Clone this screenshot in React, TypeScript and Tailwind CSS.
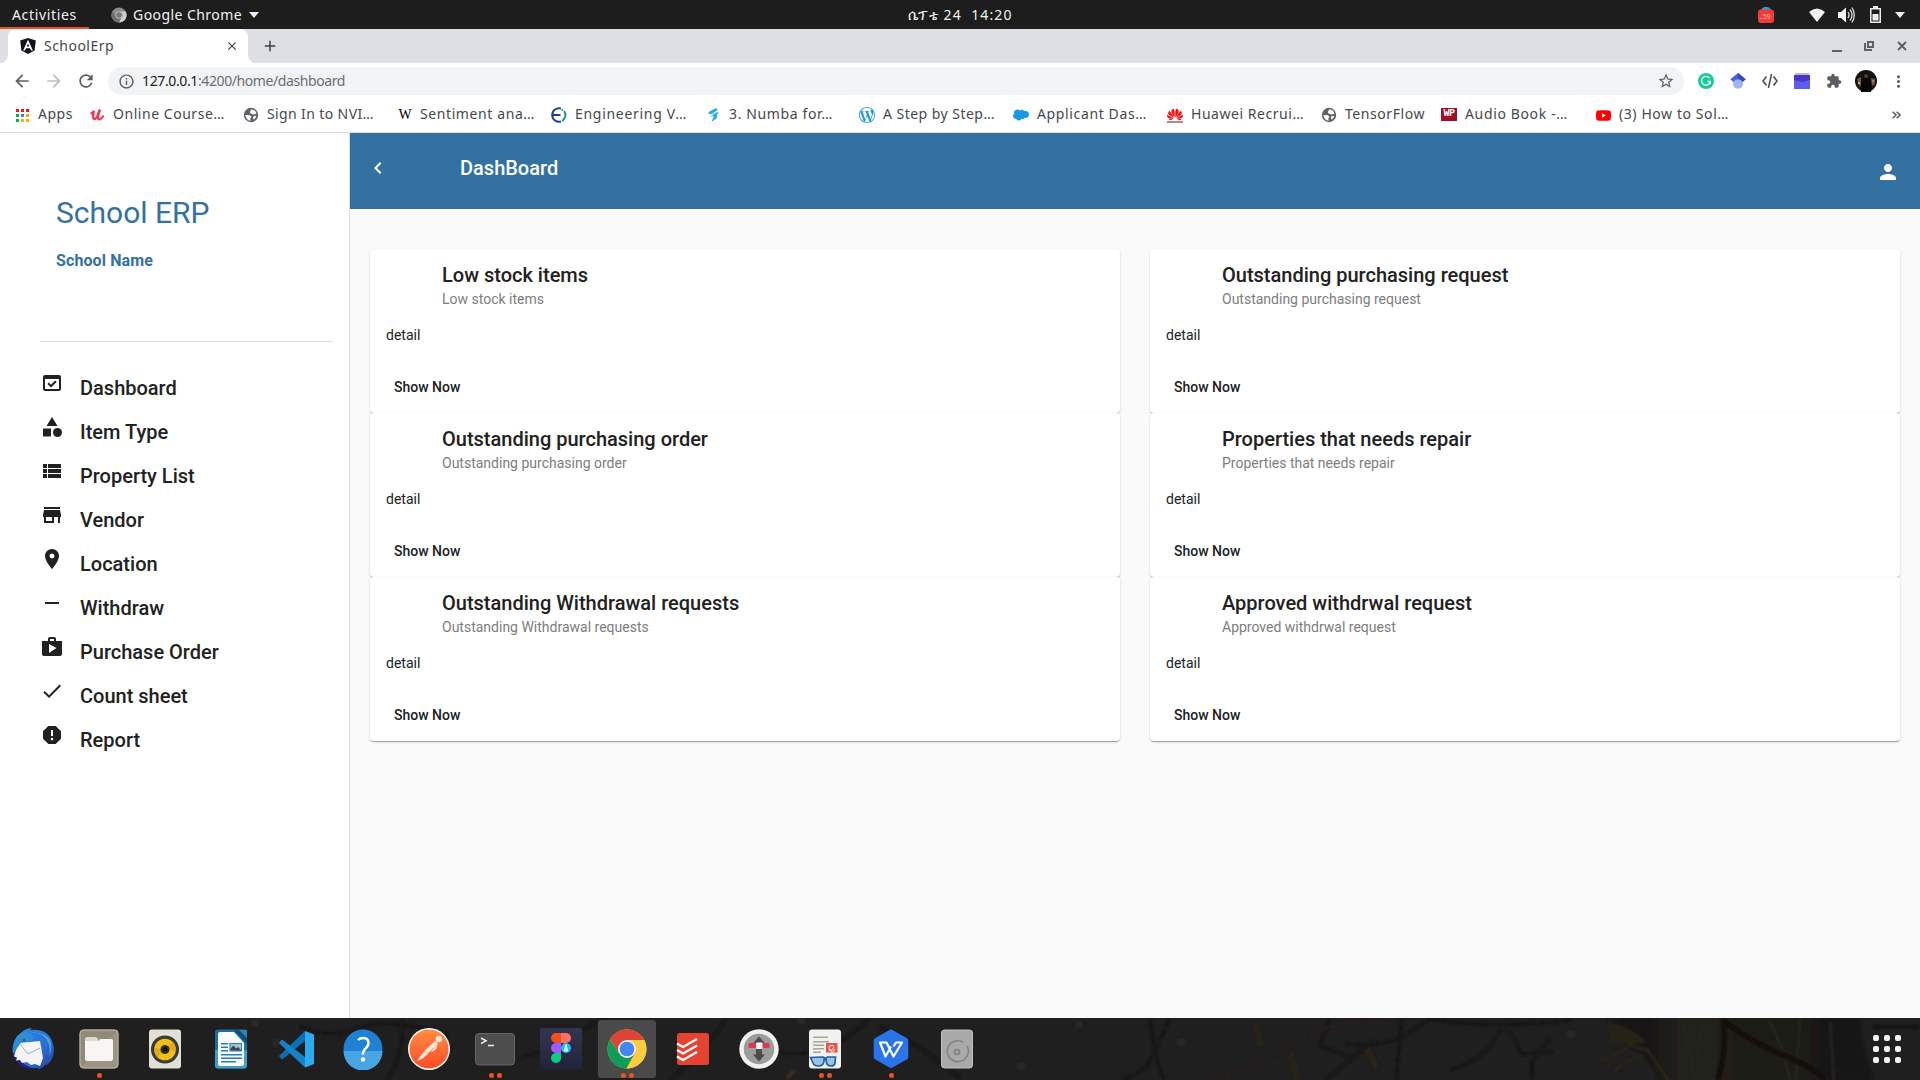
import { useLayoutEffect, useRef, useState, type ReactNode } from "react";
import {
  MdCategory,
  MdCheck,
  MdChevronLeft,
  MdDomainVerification,
  MdExtension,
  MdInfoOutline,
  MdLocationOn,
  MdPerson,
  MdRemove,
  MdReport,
  MdShop,
  MdStarBorder,
  MdStore,
  MdViewList,
  MdArrowBack,
  MdArrowForward,
  MdRefresh,
  MdMoreVert,
  MdClose,
  MdAdd,
} from "react-icons/md";
import { SiHuawei, SiSalesforce, SiWordpress, SiYoutube } from "react-icons/si";

/** Single line of text tracked so that it fills the given width. */
function Fit({ w, children, className = "" }: { w: number; children: string; className?: string }) {
  const ref = useRef<HTMLSpanElement>(null);
  const [spacing, setSpacing] = useState(0);
  useLayoutEffect(() => {
    const natural = ref.current!.getBoundingClientRect().width;
    setSpacing((w - natural) / children.length);
  }, [w, children]);
  return (
    <span ref={ref} className={"inline-block whitespace-pre " + className} style={{ letterSpacing: spacing }}>
      {children}
    </span>
  );
}

/* ---------- desktop top bar ---------- */

function TopBar() {
  return (
    <div className="grid h-[29px] grid-cols-[1fr_auto_1fr] bg-[#1d1d1d] text-[14px] text-[#f2f2f2]">
      <div className="flex">
        <div className="flex h-[29px] w-[89px] items-center border-b-2 border-[#e95420] pl-3 pt-[2px]">
          <Fit w={65}>Activities</Fit>
        </div>
        <div className="flex items-center pl-[22px]">
          <svg viewBox="0 0 16 16" className="h-4 w-4">
            <circle cx="8" cy="8" r="7.6" fill="#8d8d8d" />
            <path d="M8 4.4h6.7A7.6 7.6 0 0 1 8 15.6l3.1-5.8A3.6 3.6 0 0 0 8 4.4z" fill="#d0d0d0" />
            <path d="M1.4 4.2 4.9 9.8A3.6 3.6 0 0 0 9.5 11.3L8 15.6A7.6 7.6 0 0 1 1.4 4.2z" fill="#6f6f6f" />
            <circle cx="8" cy="8" r="3.5" fill="#bbb" />
            <circle cx="8" cy="8" r="2.7" fill="#777" />
          </svg>
          <Fit w={109} className="ml-[6px]">Google Chrome</Fit>
          <svg viewBox="0 0 10 6" className="ml-[7px] mt-px h-[6px] w-[10px]">
            <path d="M0 0h10L5 6z" fill="#eee" />
          </svg>
        </div>
      </div>
      <div className="flex items-center">
        <Fit w={105}>ሴፕቴ 24  14:20</Fit>
      </div>
      <div className="flex items-center justify-end pr-[15px]">
        <svg viewBox="0 0 16 16" className="h-4 w-4">
          <path d="M3 4a5 4.2 0 0 1 10 0z" fill="#2d9cdb" />
          <rect x="0" y="2.500" width="16" height="13.5" rx="3" fill="#f23b36" />
          <text x="1.500" y="11.800" fontSize="6.5" fill="#ffc4c0" fontFamily="Noto Sans">..59</text>
        </svg>
        <svg viewBox="0 0 16 14" className="ml-[35px] h-[14px] w-4">
          <path d="M8 14 0 4Q8-3 16 4z" fill="#f2f2f2" />
        </svg>
        <svg viewBox="0 0 17 16" className="ml-[13px] h-4 w-[17px]">
          <path d="M0 5h3l5-4.500v15L3 11H0z" fill="#f2f2f2" />
          <path d="M10 5q2 3 0 6M12 2.500q4 5.500 0 11M14 .5q4.500 7.500 0 15" stroke="#ddd" strokeWidth="1.3" fill="none" />
        </svg>
        <svg viewBox="0 0 11 17" className="ml-[15px] h-[17px] w-[11px]">
          <path d="M.75 2.750h9.500v13.500H.75z" fill="none" stroke="#eee" strokeWidth="1.5" />
          <path d="M3 0h5v2H3zM2.500 8h6v6.500h-6z" fill="#eee" />
        </svg>
        <svg viewBox="0 0 10 6" className="ml-[14px] mt-px h-[6px] w-[10px]">
          <path d="M0 0h10L5 6z" fill="#eee" />
        </svg>
      </div>
    </div>
  );
}

/* ---------- browser chrome ---------- */

function TabStrip() {
  return (
    <div className="flex h-[34px] bg-[#dedfe4]">
      <div className="flex w-2 bg-white">
        <div className="w-2 rounded-br-lg bg-[#dedfe4]" />
      </div>
      <div className="flex w-60 items-center rounded-t-lg bg-white pl-3 pr-[9px]">
        <svg viewBox="0 0 16 16" className="h-4 w-4">
          <path d="M8 0l7.800 2.600-1.200 10L8 16l-6.600-3.400L.2 2.600z" fill="#10131c" />
          <path d="M8 1.800l4.900 10.800H11L10 10.200H6l-1 2.400H3.100zM8 5.400 6.700 8.600h2.600z" fill="#fff" fillRule="evenodd" />
        </svg>
        <Fit w={70} className="mb-px ml-2 text-[14px] text-[#45494d]">SchoolErp</Fit>
        <MdClose className="ml-auto h-[14px] w-[14px] text-[#3c4043]" />
      </div>
      <div className="flex w-2 bg-white">
        <div className="w-2 rounded-bl-lg bg-[#dedfe4]" />
      </div>
      <MdAdd className="ml-[5px] mt-2 h-[18px] w-[18px] text-[#3c4043]" />
      <div className="ml-auto flex items-center pr-[13px] text-[#5f6368]">
        <div className="mt-[9px] h-[2px] w-[10px] bg-[#5f6368]" />
        <svg viewBox="0 0 10 10" className="ml-[22px] h-[10px] w-[10px]">
          <path d="M4 1h5v5H4zM1 2v7h7" fill="none" stroke="#5f6368" strokeWidth="2" />
        </svg>
        <svg viewBox="0 0 10 10" className="ml-[23px] h-[10px] w-[10px]">
          <path d="M1 1l8 8M9 1L1 9" fill="none" stroke="#5f6368" strokeWidth="2" />
        </svg>
      </div>
    </div>
  );
}

function ToolbarCell({ children }: { children: ReactNode }) {
  return <div className="flex w-8 items-center justify-center">{children}</div>;
}

function Toolbar() {
  return (
    <div className="flex h-9 bg-white pl-[6px] pr-1 pt-1 text-[#5a5e63]">
      <div className="flex h-7">
        <ToolbarCell><MdArrowBack className="h-[20px] w-[20px]" /></ToolbarCell>
        <ToolbarCell><MdArrowForward className="h-[20px] w-[20px] text-[#bcbec1]" /></ToolbarCell>
        <ToolbarCell><MdRefresh className="h-[20px] w-[20px]" /></ToolbarCell>
      </div>
      <div className="ml-[6px] flex h-7 w-[1576px] items-center rounded-full bg-[#f1f3f4] pl-[10px] pr-[9px]">
        <MdInfoOutline className="h-[17px] w-[17px]" />
        <div className="mb-[2px] ml-[7px] flex text-[14px]">
          <Fit w={56} className="text-[#202124]">127.0.0.1</Fit>
          <Fit w={147} className="text-[#6b6f74]">:4200/home/dashboard</Fit>
        </div>
        <MdStarBorder className="ml-auto h-[18px] w-[18px]" />
      </div>
      <div className="ml-[6px] flex h-7">
        <ToolbarCell>
          <svg viewBox="0 0 16 16" className="h-4 w-4">
            <circle cx="8" cy="8" r="8" fill="#0fce9b" />
            <path d="M11.500 5.200A4.400 4.400 0 1 0 12.300 8.500H9.500M12.300 8.500v2.600" fill="none" stroke="#fff" strokeWidth="1.4" />
          </svg>
        </ToolbarCell>
        <ToolbarCell>
          <svg viewBox="0 0 16 16" className="h-4 w-4">
            <circle cx="8" cy="10.800" r="5" fill="#a0b4f7" />
            <path d="M8 0 .3 6.200 3.500 9a5 5 0 0 1 9 0l3.200-2.800z" fill="#4c5fe0" />
            <path d="M8 0l7.700 6.200L12.500 9A5 5 0 0 0 8 6z" fill="#3b43b8" />
          </svg>
        </ToolbarCell>
        <ToolbarCell>
          <svg viewBox="0 0 16 14" className="h-[14px] w-4" fill="none" stroke="#45494d" strokeWidth="1.5">
            <path d="M4.500 2.500 1 7l3.500 4.500M11.500 2.500 15 7l-3.500 4.500M9.600 0 6.400 14" />
          </svg>
        </ToolbarCell>
        <ToolbarCell>
          <svg viewBox="0 0 16 16" className="h-4 w-4">
            <path d="M1 0h14v2H1z" fill="#bdbdbd" />
            <path d="M0 2h16v14H0z" fill="#5b5cf0" />
            <path d="M0 2h16v5L8 9 0 7z" fill="#4a35cf" />
          </svg>
        </ToolbarCell>
        <ToolbarCell><MdExtension className="h-4 w-4" /></ToolbarCell>
        <ToolbarCell>
          <svg viewBox="0 0 22 22" className="h-[22px] w-[22px]">
            <circle cx="11" cy="11" r="11" fill="#15110f" />
            <path d="M2 9l4-2v8l-2 2zM16 8l4 1v5l-3 2z" fill="#6d5a42" />
            <path d="M6 22q-1-12 3-14h4q4 2 3 14z" fill="#050505" />
            <circle cx="11" cy="6" r="2" fill="#54372a" />
            <circle cx="4" cy="13" r="1" fill="#d8c9a0" />
            <circle cx="18" cy="11" r="1" fill="#cf7d68" />
          </svg>
        </ToolbarCell>
        <div className="flex w-8 items-center justify-center"><MdMoreVert className="h-[19px] w-[19px]" /></div>
      </div>
    </div>
  );
}

function Globe() {
  return (
    <svg viewBox="0 0 16 16" className="h-4 w-4">
      <circle cx="8" cy="8" r="7.2" fill="#5f6368" />
      <path d="M2.300 8 7 8.300l1.500 1.700-1.300 1.500.6 2.300Q3 13 2.300 8zM8 2.600q4-.6 5.500 3.800L11 7.600 8.500 7 6.800 5.500zM9.800 9.800l3.500-1.300q-.4 2.800-2.600 4.200z" fill="#fff" />
    </svg>
  );
}

const appColors = ["bg-[#f0141e]", "bg-[#f0141e]", "bg-[#f0141e]", "bg-[#0fa55a]", "bg-[#3f7df5]", "bg-[#f5a800]", "bg-[#0fa55a]", "bg-[#f5b400]", "bg-[#f5b400]"];

const bookmarks: { label: string; cell: string; width: number; icon: ReactNode }[] = [
  {
    label: "Apps", cell: "w-[75px]", width: 34,
    icon: (
      <span className="grid w-[13px] grid-cols-3 gap-[2px]">
        {appColors.map((c, i) => <i key={i} className={"h-[3px] w-[3px] " + c} />)}
      </span>
    ),
  },
  {
    label: "Online Course…", cell: "w-[154px]", width: 111,
    icon: (
      <svg viewBox="0 0 16 16" className="h-4 w-4" fill="none" stroke="#f0394f" strokeLinecap="round">
        <path d="M2.500 6.300Q4 6 5 3.800 3.500 9 4.300 11.300q1.700 2 4-1.800L10.500 3.500" strokeWidth="2.4" />
        <path d="M10.500 3.500 9 9.500q-.5 3.500 2 2.800 1.500-.5 3-3" strokeWidth="2.2" />
      </svg>
    ),
  },
  { label: "Sign In to NVI…", cell: "w-[153px]", width: 106, icon: <Globe /> },
  { label: "Sentiment ana…", cell: "w-[155px]", width: 114, icon: <span className="ml-[2px] font-['Liberation_Serif'] text-[14px] leading-4 text-black">W</span> },
  {
    label: "Engineering V…", cell: "w-[154px]", width: 111,
    icon: (
      <svg viewBox="0 0 16 16" className="h-4 w-4" fill="none" strokeWidth="2">
        <path d="M10 1.500A6.800 6.800 0 1 0 10 14.500M2 8h7.500" stroke="#23408e" />
        <path d="M10.500 3h1.500M13 4a6.800 6.800 0 0 1 0 8q-1 1.500-2 2" stroke="#1a9c84" />
      </svg>
    ),
  },
  {
    label: "3. Numba for…", cell: "w-[154px]", width: 103,
    icon: (
      <svg viewBox="0 0 16 16" className="h-4 w-4">
        <path d="M11.500 1 5 4.200Q2.500 5.500 4 7.200L11 6l-6 3.500 4-.6-2.500 6L11 11.800Q13 10 11.800 8L14 5.200 8 6l4.500-3z" fill="#22a7f0" />
      </svg>
    ),
  },
  { label: "A Step by Step…", cell: "w-[154px]", width: 111, icon: <SiWordpress className="h-4 w-4 text-[#1a9ad6]" /> },
  { label: "Applicant Das…", cell: "w-[154px]", width: 109, icon: <SiSalesforce className="h-4 w-4 text-[#1798e0]" /> },
  {
    label: "Huawei Recrui…", cell: "w-[154px]", width: 112,
    icon: (
      <span className="flex flex-col items-center">
        <SiHuawei className="h-[15px] w-4 text-[#f21414]" preserveAspectRatio="none" />
        <span className="-mt-px h-[2px] w-4 bg-[#b08a8a]" />
      </span>
    ),
  },
  { label: "TensorFlow", cell: "w-[120px]", width: 79, icon: <Globe /> },
  {
    label: "Audio Book -…", cell: "w-[154px]", width: 102,
    icon: (
      <span className="flex h-[13px] w-4 -translate-y-px items-center justify-center bg-[#a30e22] font-['Liberation_Mono'] text-[10px] font-bold leading-none tracking-tighter text-white">
        WP
      </span>
    ),
  },
  { label: "(3) How to Sol…", cell: "w-[154px]", width: 109, icon: <SiYoutube className="h-[15px] w-[15px] text-[#ff0000]" /> },
];

function BookmarkBar() {
  return (
    <div className="flex h-[34px] items-center border-b border-[#d9dbe0] bg-white pb-px pl-[14px] text-[14px] text-[#45494d]">
      {bookmarks.map((b) => (
        <div key={b.label} className={"flex shrink-0 items-center " + b.cell}>
          <span className="flex h-4 w-4 items-center justify-center">{b.icon}</span>
          <Fit w={b.width + 1} className="mb-[3px] ml-2">{b.label}</Fit>
        </div>
      ))}
      <svg viewBox="0 0 9 8" className="ml-auto mr-[19px] h-2 w-[9px]" fill="none" stroke="#5f6368" strokeWidth="1.6">
        <path d="M.7.7 4 4 .7 7.300M4.700.7 8 4 4.700 7.300" />
      </svg>
    </div>
  );
}

/* ---------- application ---------- */

const menu = [
  { label: "Dashboard", Icon: MdDomainVerification },
  { label: "Item Type", Icon: MdCategory },
  { label: "Property List", Icon: MdViewList },
  { label: "Vendor", Icon: MdStore },
  { label: "Location", Icon: MdLocationOn },
  { label: "Withdraw", Icon: MdRemove },
  { label: "Purchase Order", Icon: MdShop },
  { label: "Count sheet", Icon: MdCheck },
  { label: "Report", Icon: MdReport },
];

function Sidebar() {
  return (
    <aside className="w-[350px] shrink-0 border-r border-[#dcdcdc] bg-white">
      <div className="ml-10 mr-4 h-[209px] border-b border-[#dcdcdc] pl-4 pt-[60px] text-[#3371a1]">
        <h1 className="text-[30px] leading-10">School ERP</h1>
        <p className="mt-[18px] text-[16px] font-bold leading-5">
          <Fit w={97}>School Name</Fit>
        </p>
      </div>
      <nav className="mt-[23px] flex flex-col pl-10">
        {menu.map(({ label, Icon }) => (
          <a key={label} className="flex h-11 items-center text-[20px] font-medium text-[#212121]">
            <Icon className="mb-2 h-6 w-6" />
            <span className="ml-4 mt-[2px]">{label}</span>
          </a>
        ))}
      </nav>
    </aside>
  );
}

const columns = [
  ["Low stock items", "Outstanding purchasing order", "Outstanding Withdrawal requests"],
  ["Outstanding purchasing request", "Properties that needs repair", "Approved withdrwal request"],
];

function Card({ title }: { title: string }) {
  return (
    <section className="h-[164px] rounded bg-white px-4 pt-[14px] text-[14px] text-[#212121] shadow-[0_2px_1px_-1px_rgba(0,0,0,0.2),0_1px_1px_0_rgba(0,0,0,0.14),0_1px_3px_0_rgba(0,0,0,0.12)]">
      <header className="pl-14">
        <h2 className="text-[20px] font-medium leading-6">{title}</h2>
        <p className="mt-[2px] leading-5 text-[#7d7d7d]">{title}</p>
      </header>
      <p className="mt-4 leading-5">detail</p>
      <button className="mt-6 h-9 px-2 font-medium">Show Now</button>
    </section>
  );
}

function Page() {
  return (
    <div className="flex h-[885px] bg-[#fafafa] font-[Roboto,sans-serif]">
      <Sidebar />
      <main className="flex-1">
        <header className="flex h-[76px] items-start bg-[#3371a1] pl-4 pr-5 text-white">
          <MdChevronLeft className="mt-[23px] h-6 w-6" />
          <h1 className="ml-[70px] mt-[23px] text-[20px] font-medium leading-6">DashBoard</h1>
          <MdPerson className="ml-auto mt-[27px] h-6 w-6" />
        </header>
        <div className="grid grid-cols-2 gap-x-[30px] px-5 pt-10">
          {columns.map((titles, i) => (
            <div key={i}>{titles.map((t) => <Card key={t} title={t} />)}</div>
          ))}
        </div>
      </main>
    </div>
  );
}

/* ---------- dock ---------- */

function Art({ children }: { children: ReactNode }) {
  return <svg viewBox="0 0 42 42" className="h-[42px] w-[42px]">{children}</svg>;
}

const dock: { name: string; dots?: number; active?: boolean; art: ReactNode }[] = [
  {
    name: "mail",
    art: (
      <Art>
        <defs>
          <linearGradient id="tb" x1="0" y1="0" x2="1" y2="1"><stop offset="0" stopColor="#2d8be0" /><stop offset=".6" stopColor="#2a6fd6" /><stop offset="1" stopColor="#2a3a9c" /></linearGradient>
        </defs>
        <path d="M10 4q4-4 10-4l-2 2q14-2 20 7 5 8 3.500 17-1 7-8 12l1-3q-3 5-9 6.500l1-2q-6 2-12-2Q1 33 .5 22 .5 11 10 4z" fill="url(#tb)" />
        <path d="M18 5q11-2 17 7 4 7 2 16 4-8 1-16Q32 3 18 5z" fill="#4aa3ea" />
        <path d="M7 36Q1 31 1 24l5 4 8 10 6 3q-8 0-13-5z" fill="#2b1c86" />
        <path d="M3 25 7 15l21-2 3 17-3 8-5-2-4 1-4-3-5 1-2-3-4 .5 1-3-3-1z" fill="#f3f5f6" />
        <path d="M7 15l9 11 12-6" fill="none" stroke="#a9b2bc" strokeWidth="1" />
        <path d="M2 15Q4 6 13 3q9 2 8 8l-4 3-7-1-4 6q-4 1-4.500 8-1-6 .5-12z" fill="#2c8ed8" />
        <circle cx="12" cy="12" r="1.200" fill="#6b4b1f" />
      </Art>
    ),
  },
  {
    name: "files", dots: 1,
    art: (
      <Art>
        <rect x="1.500" y="1.500" width="39" height="39" rx="4" fill="#9d9584" />
        <path d="M3 3h36L3 39z" fill="#918a79" />
        <rect x="2" y="2" width="38" height="38" rx="4" fill="none" stroke="#bbb3a1" />
        <path d="M7 11q0-2 2-2h8q2 0 3 2l1 2v5H7z" fill="#dcd9cf" />
        <rect x="7" y="13" width="28" height="20" rx="2" fill="#f7f6f4" />
        <path d="M7 13h14l1-2h11q2 0 2 2v5H7z" fill="#f7f6f4" />
      </Art>
    ),
  },
  {
    name: "music",
    art: (
      <Art>
        <rect x="5" y="1.500" width="32" height="39" rx="3" fill="#e2dfd4" />
        <circle cx="21" cy="21.500" r="14" fill="#3a3a3a" />
        <circle cx="21" cy="21.500" r="10.800" fill="#f3bd1a" />
        <path d="M21 21.500 29 14q3 4 2.600 9zM21 21.500 13 29q-3-4-2.600-9z" fill="#e0a812" />
        <circle cx="21" cy="21.500" r="4.500" fill="#2d2d2d" />
        <circle cx="21" cy="21.500" r="2.300" fill="#111" />
      </Art>
    ),
  },
  {
    name: "writer",
    art: (
      <Art>
        <rect x="5" y="1.500" width="32" height="39" rx="3" fill="#1a6f9f" />
        <path d="M5 22h32v15q0 3.500-3 3.500H8q-3 0-3-3z" fill="#3f9fcb" />
        <path d="M10 4h14l10 11v21q0 2-2 2H10q-2 0-2-2V6q0-2 2-2z" fill="#fafafa" />
        <path d="M24 2h13v14z" fill="#124c70" />
        <path d="M29 2h8v8z" fill="#2c85b4" />
        <g fill="#1e7fb5">
          <path d="M11 15h7v1.400h-7zM11 18.500h7v1.400h-7zM11 22h7v1.400h-7zM11 26h21v1.400H11zM11 29.500h21v1.400H11zM11 33h15v1.400H11z" />
          <path d="M19.500 15H32v8.500H19.500z" />
        </g>
        <path d="M20.500 16H31v6.500H20.500z" fill="#8fc7e8" />
        <path d="M20.500 22.500v-2l3-3 2.500 3 2-1.500 3 3v.5z" fill="#444" />
        <circle cx="29" cy="17.500" r="1.200" fill="#e6c14a" />
      </Art>
    ),
  },
  {
    name: "code",
    art: (
      <Art>
        <path d="M3 28l3 3.500L29 13V3z" fill="#0a6fb8" />
        <path d="M29 3l9 3.500v29.500l-9 3.500z" fill="#2cabf1" />
        <path d="M3 15 6 11.500 29 29v10.500z" fill="#1583cb" />
      </Art>
    ),
  },
  {
    name: "help",
    art: (
      <Art>
        <circle cx="21" cy="21" r="19.500" fill="#2080d4" />
        <path d="M1.500 23h39A19.500 19.500 0 0 1 1.500 23z" fill="#47a5e6" />
        <path d="M16 12q2-2 5-2 5.500 0 5.500 5 0 3-3 5.500-2.500 2-2.500 6" fill="none" stroke="#fff" strokeWidth="2.4" />
        <circle cx="21" cy="31.500" r="2.200" fill="#fff" />
      </Art>
    ),
  },
  {
    name: "postman",
    art: (
      <Art>
        <defs>
          <linearGradient id="pm" x1="0" y1="0" x2="0" y2="1"><stop offset="0" stopColor="#ff8e42" /><stop offset="1" stopColor="#ff4b26" /></linearGradient>
        </defs>
        <circle cx="21" cy="21" r="21" fill="#fff" />
        <circle cx="21" cy="21" r="19.600" fill="url(#pm)" />
        <circle cx="31" cy="11" r="3.300" fill="#ffe3d8" />
        <path d="M27 13.500l2.500 2-9 9-4-1.500zM16 24l4 1.500-6 5-4.500 2zM29 16l-1 5-5 3" fill="#ffe9df" stroke="#ffe9df" strokeWidth=".7" />
      </Art>
    ),
  },
  {
    name: "terminal", dots: 2,
    art: (
      <Art>
        <rect x="1.500" y="5.500" width="39" height="31.500" rx="3.500" fill="#4d4d4d" stroke="#666" />
        <path d="M7 10l5 2.800-5 2.800" fill="none" stroke="#f0f0f0" strokeWidth="1.6" />
        <path d="M14 17.500h6" stroke="#f0f0f0" strokeWidth="1.5" />
      </Art>
    ),
  },
  {
    name: "figma",
    art: (
      <Art>
        <defs>
          <linearGradient id="fg" x1="0" y1="0" x2="0" y2="1"><stop offset="0" stopColor="#343650" /><stop offset="1" stopColor="#202338" /></linearGradient>
        </defs>
        <rect width="42" height="42" rx="2" fill="url(#fg)" />
        <path d="M21 5h-5a5 5 0 0 0 0 10h5z" fill="#f24e1e" />
        <path d="M21 5h5a5 5 0 0 1 0 10h-5z" fill="#ff7262" />
        <path d="M21 15h-5a5 5 0 0 0 0 10h5z" fill="#a259ff" />
        <path d="M21 25h-5a5 5 0 1 0 5 5z" fill="#0acf83" />
        <circle cx="26" cy="20" r="5" fill="#1abcfe" />
        <path d="M26 16.500 24.300 23h3.400zM24.300 23l1.700-2.500 1.700 2.500" fill="none" stroke="#fff" strokeWidth="1" />
      </Art>
    ),
  },
  {
    name: "chrome", dots: 2, active: true,
    art: (
      <Art>
        <circle cx="21" cy="21" r="19.500" fill="#fdcc40" />
        <path d="M21 12h17.200A19.500 19.500 0 0 0 4 11.500L13.200 25.500z" fill="#db4437" />
        <path d="M4 11.500A19.500 19.500 0 0 0 20.500 40.500L29 25.500 13.200 25.500z" fill="#109d58" />
        <path d="M21 12h17.200A19.500 19.500 0 0 1 20.500 40.500L28.800 25.500z" fill="#fdcc40" />
        <circle cx="21" cy="21" r="9" fill="#f2f2f2" />
        <circle cx="21" cy="21" r="7.300" fill="#4285f4" />
      </Art>
    ),
  },
  {
    name: "tasks",
    art: (
      <Art>
        <rect x="5" y="5" width="32" height="32" rx="2.500" fill="#e44332" />
        <path d="M5 15.500l6 3.500 14-8M5 22l6 3.500 14-8M5 28.500l6 3.500 14-8" fill="none" stroke="#fff" strokeWidth="2.2" />
      </Art>
    ),
  },
  {
    name: "transmission",
    art: (
      <Art>
        <circle cx="21" cy="21" r="19.700" fill="#f1f1f1" />
        <circle cx="21" cy="21" r="15.300" fill="#9a9d99" />
        <path d="M21 8.500l6 7h-3v11h3l-6 7-6-7h3v-11h-3z" fill="#4c4c4c" />
        <rect x="10.500" y="15" width="21" height="5" rx="1.500" fill="#ea3148" />
        <rect x="18" y="14.500" width="6.500" height="6.500" rx="1" fill="#f7f7f7" />
      </Art>
    ),
  },
  {
    name: "viewer", dots: 2,
    art: (
      <Art>
        <rect x="5" y="1.500" width="32" height="39" rx="3" fill="#f1f1f0" />
        <path d="M9 8.500h15v1.500H9zM9 13h16v1.500H9zM9 16.500h11v1.500H9zM9 20h11v1.500H9zM9 23.500h8V25H9z" fill="#aaa698" />
        <rect x="22" y="15" width="11.500" height="9.500" fill="#ee5145" />
        <path d="M24.500 22q4 1 5-2t-2.500-2.500-1 4.500 5-1" fill="none" stroke="#fff" />
        <path d="M6.500 29.500 19 29q1.500 0 1.500 2l-1 4q-1 3-5 3-4.500 0-5.500-3zM22 31q0-2 2-2h7.500l-.5 6q-.5 3-4 3t-4.500-3z" fill="#9cc3e6" stroke="#2560a0" strokeWidth="1.7" />
        <path d="M19.500 31h3" stroke="#2560a0" strokeWidth="1.7" />
      </Art>
    ),
  },
  {
    name: "wps", dots: 1,
    art: (
      <Art>
        <path d="M21 1.500q1 0 2 .7l14 8q1.300.8 1.300 2.400v16.300q0 1.600-1.300 2.400l-14 8q-2 1.200-4 0l-14-8q-1.300-.8-1.300-2.400V12.600q0-1.600 1.300-2.400l14-8q1-.7 2-.7z" fill="#2a73e8" />
        <path d="M17 14.500H10l5.500 14 5.500-10M16.500 14.500l7 14 8.500-14h-6l-2.500 4" fill="none" stroke="#fff" strokeWidth="2.2" strokeLinejoin="round" />
      </Art>
    ),
  },
  {
    name: "disc",
    art: (
      <Art>
        <rect x="5.500" y="2" width="31" height="38" rx="3" fill="#a9a9a9" stroke="#c3c3c3" />
        <path d="M31 18a10.500 10.500 0 1 1-4-4" fill="none" stroke="#858585" strokeWidth="1.6" />
        <circle cx="21" cy="24" r="2.500" fill="none" stroke="#808080" strokeWidth="1.6" />
      </Art>
    ),
  },
];

/** Dim tree and branches behind the dock. */
function Wallpaper() {
  return (
    <svg viewBox="0 0 1920 62" className="absolute inset-0 h-[62px] w-[1920px]" fill="none">
      <defs>
        <linearGradient id="trunk" x1="0" x2="1">
          <stop offset="0" stopColor="#1d1b18" />
          <stop offset=".12" stopColor="#151413" />
          <stop offset=".3" stopColor="#24221d" />
          <stop offset=".5" stopColor="#1f1e18" />
          <stop offset=".75" stopColor="#1b1a17" />
          <stop offset="1" stopColor="#141313" />
        </linearGradient>
        <filter id="soft"><feGaussianBlur stdDeviation="1" /></filter>
      </defs>
      <g filter="url(#soft)">
        <path d="M1606 0h254q2 34 14 62h-216q-10-26-30-32z" fill="url(#trunk)" />
        <path d="M1607 6q18-2 40 18-14 4-36 0z" fill="#252015" />
        <path d="M1598 43q20-6 32-16l20 6M1614 56q6-14 30-18" stroke="#272117" strokeWidth="4" />
        <path d="M1646 30l22 32" stroke="#2a241a" strokeWidth="3" />
        <path d="M1682 4l14 58M1704 0l-8 40M1768 0l14 30 8 32M1800 0l-4 62M1830 4l4 58" stroke="#26241e" strokeWidth="3" />
        <path d="M1723 0q4 30-5 62M1725 4q30 22 60 34t40 24" stroke="#121110" strokeWidth="6" />
        <g stroke="#191615" strokeWidth="3">
          <path d="M300 8q30 14 60 2t90 8M402 0q4 30-14 62M520 40q40-10 70-32t60 2M670 62q40-34 56-62M760 30q60 20 110-30M880 8l40 22 40 30" />
          <path d="M1170 0q-16 36-24 50l-26 14M1150 0q4 40 14 62M1430 0q30 8 90 6t50-6M1500 6q20 18 20 30l34-2M1532 62v-20l18-22" />
          <path d="M1345 26q40 4 62-10l24-16M1402 0l-6 62M1330 0l-10 28 34 12M1325 62l50-40M1500 10q-10 30-50 42M1872 9h48" />
        </g>
        <path d="M1210 61q50-10 90-38t96-16" stroke="#251f1a" strokeWidth="3" />
        <path d="M1255 4l6 24M1290 36l8 26M1367 30l10 20" stroke="#2b2119" strokeWidth="6" />
        <path d="M787 60l8-8" stroke="#4a331c" strokeWidth="3" />
        <g fill="#2d282a">
          <circle cx="1079" cy="7" r="4" /><circle cx="1181" cy="24" r="4" /><circle cx="1021" cy="48" r="4" /><circle cx="1571" cy="16" r="4" />
          <circle cx="255" cy="5" r="4" /><circle cx="276" cy="25" r="4" /><circle cx="802" cy="3" r="4" />
        </g>
      </g>
    </svg>
  );
}

function Dock() {
  return (
    <div className="relative h-[62px] overflow-hidden bg-[#201f1f]">
      <Wallpaper />
      <div className="relative flex h-full items-center">
        {dock.map((d) => (
          <div key={d.name} className="flex w-[66px] shrink-0 justify-center">
            <div className={"relative flex h-[58px] w-[58px] items-center justify-center rounded-[3px] " + (d.active ? "bg-[#4b4a4a]" : "")}>
              {d.art}
              {d.dots && (
                <div className="absolute inset-x-0 bottom-0 flex justify-center gap-[3px]">
                  {Array.from({ length: d.dots }, (_, i) => <i key={i} className="h-[5px] w-[5px] rounded-full bg-[#e95420]" />)}
                </div>
              )}
            </div>
          </div>
        ))}
        <div className="ml-auto mr-[19px] grid grid-cols-3 gap-[5px]">
          {Array.from({ length: 9 }, (_, i) => <i key={i} className="h-[6px] w-[6px] rounded-[2px] bg-[#f2f2f2]" />)}
        </div>
      </div>
    </div>
  );
}

export default function App() {
  return (
    <div className="h-[1080px] w-[1920px] overflow-hidden font-['Noto_Sans',sans-serif]">
      <TopBar />
      <TabStrip />
      <Toolbar />
      <BookmarkBar />
      <Page />
      <Dock />
    </div>
  );
}
